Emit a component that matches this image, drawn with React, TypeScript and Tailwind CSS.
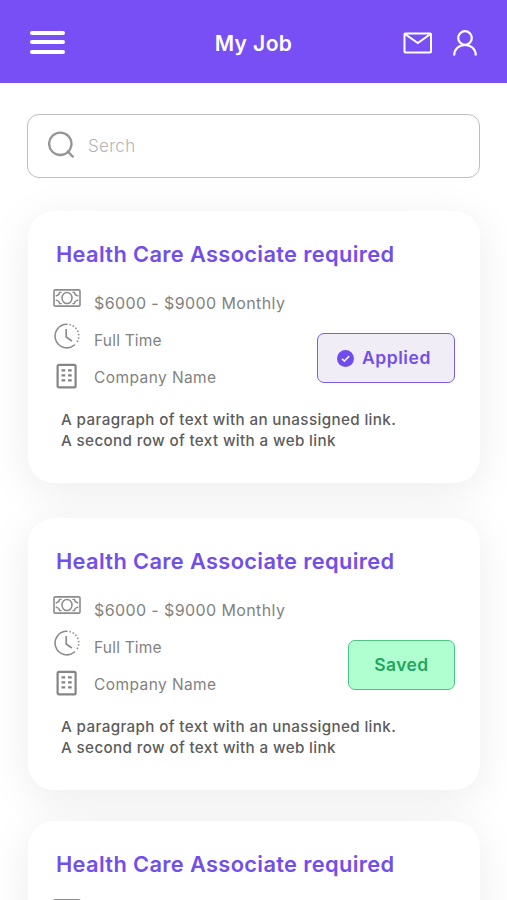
import React from 'react';

type JobStatus = 'applied' | 'saved';

interface Job {
  id: number;
  title: string;
  salary: string;
  type: string;
  company: string;
  description: string[];
  status: JobStatus;
}

const jobs: Job[] = [1, 2, 3].map((id) => ({
  id,
  title: 'Health Care Associate required',
  salary: '$6000 - $9000 Monthly',
  type: 'Full Time',
  company: 'Company Name',
  description: ['A paragraph of text with an unassigned link.', 'A second row of text with a web link'],
  status: id === 1 ? 'applied' : 'saved',
}));

function MoneyIcon() {
  return (
    <svg className="w-7 h-[18px]" viewBox="0 0 28 18" fill="none" stroke="#8c8c8c" strokeWidth={1.6}>
      <rect x="1" y="0.9" width="26" height="16.2" rx="1.2" />
      <ellipse cx="14" cy="9" rx="5" ry="5.6" strokeWidth={1.5} />
      <path
        d="M8.6 3.4H6.6A3.6 3.6 0 0 1 3.4 6.6V7.4M19.4 3.4h2a3.6 3.6 0 0 0 3.2 3.2V7.4M8.6 14.6H6.6a3.6 3.6 0 0 0-3.2-3.2V10.6M19.4 14.6h2a3.6 3.6 0 0 1 3.2-3.2V10.6"
        strokeWidth={1.4}
      />
    </svg>
  );
}

function ClockIcon() {
  return (
    <svg className="w-[26px] h-[26px]" viewBox="0 0 26 26" fill="none" stroke="#8c8c8c" strokeWidth={1.6}>
      <path d="M13 1.2A11.8 11.8 0 1 0 20.5 22" strokeLinecap="round" />
      <path d="M15.5 1.5A11.8 11.8 0 0 1 22.6 19.8" strokeDasharray="1.5 1.9" strokeWidth={1.6} />
      <path d="M12.2 6v8l5.6 4" strokeWidth={1.7} />
    </svg>
  );
}

function BuildingIcon() {
  return (
    <svg className="w-[21px] h-[26px]" viewBox="0 0 21 26" fill="none" stroke="#858585">
      <rect x="1.6" y="1.9" width="18" height="22.4" rx="1.4" strokeWidth={2.2} />
      <path
        d="M5.5 7.4h3.7M12 7.4h3.7M5.5 12.4h3.7M12 12.4h3.7M5.5 17.4h3.7M12 17.4h3.7"
        strokeWidth={2.3}
      />
    </svg>
  );
}

function StatusButton({ status }: { status: JobStatus }) {
  if (status === 'applied') {
    return (
      <button className="flex items-center w-[138px] h-[50px] pl-[19px] rounded-[7px] border border-[#7a5cec] bg-[#f0edf6] text-[#724eeb]">
        <svg className="w-[17px] h-[17px] mr-2 shrink-0" viewBox="0 0 17 17">
          <circle cx="8.5" cy="8.5" r="8.5" fill="#704cea" />
          <path d="M5 8.9l2.4 2.2 4.8-4.9" fill="none" stroke="#f0edf6" strokeWidth="1.7" />
        </svg>
        <span className="text-[17.5px] leading-none font-semibold tracking-[0.55px]">Applied</span>
      </button>
    );
  }

  return (
    <button className="flex items-center justify-center w-[107px] h-[50px] rounded-[7px] border border-[#4cc482] bg-[#b0ffd0] text-[#24a65c]">
      <span className="text-[17.5px] leading-none font-semibold tracking-[0.4px]">Saved</span>
    </button>
  );
}

function JobCard({ job }: { job: Job }) {
  return (
    <article className="h-[272px] shrink-0 rounded-[26px] bg-white pl-[25px] pr-[25px] pt-[29px] shadow-[0_8px_44px_rgba(0,0,0,0.08)]">
      <h2 className="pl-[3px] text-[21.8px] leading-[28px] font-semibold tracking-[0.36px] text-[#724eeb] whitespace-nowrap">
        {job.title}
      </h2>
      <div className="flex justify-between mt-[18px]">
        <ul className="text-[15.5px] leading-[20px] text-[#828282] whitespace-nowrap">
          <li className="flex h-[37px]">
            <span className="w-[41px] pt-[3px]"><MoneyIcon /></span>
            <span className="pt-[7px] text-[16px] tracking-[0.4px]">{job.salary}</span>
          </li>
          <li className="flex h-[38px]">
            <span className="w-[41px] pl-px"><ClockIcon /></span>
            <span className="pt-[8px] tracking-[0.2px]">{job.type}</span>
          </li>
          <li className="flex h-[37px]">
            <span className="w-[41px] pl-[3px] pt-[2px]"><BuildingIcon /></span>
            <span className="pt-[7px] tracking-[0.42px]">{job.company}</span>
          </li>
        </ul>
        <div className="pt-[47px] -ml-6">
          <StatusButton status={job.status} />
        </div>
      </div>
      <p className="pl-2 mt-[12px] text-[15.2px] leading-[20.5px] font-medium tracking-[0.37px] text-[#5c5c5c] whitespace-nowrap">
        {job.description[0]}
        <br />
        {job.description[1]}
      </p>
    </article>
  );
}

export default function App() {
  return (
    <div className="w-[507px] h-[900px] overflow-x-hidden overflow-y-auto [scrollbar-width:none] bg-white font-['Inter',sans-serif]">
      <header className="grid grid-cols-3 items-center h-[83px] px-[30px] bg-[#774ff5] text-white">
        <button className="flex flex-col gap-[5.5px] w-[34.5px] pt-px" aria-label="Menu">
          <span className="h-1 w-full rounded-full bg-white" />
          <span className="h-1 w-full rounded-full bg-white" />
          <span className="h-1 w-full rounded-full bg-white" />
        </button>
        <h1 className="text-center text-[21px] leading-none font-semibold tracking-[0.4px] pt-[3px]">My Job</h1>
        <div className="flex items-center justify-end gap-[20px] pt-[3px]">
          <svg className="w-[30px] h-[22px]" viewBox="0 0 30 22" fill="none" stroke="white" strokeWidth={2}>
            <rect x="1.5" y="1.5" width="26.5" height="19" rx="0.8" />
            <path d="M2 2l12.8 9L27.5 2" />
          </svg>
          <svg className="w-6 h-[26px]" viewBox="0 0 24 26" fill="none" stroke="white" strokeWidth={2.2}>
            <circle cx="12" cy="8" r="6.8" />
            <path d="M1.2 25.5C1.2 19 6 15 12 15s10.8 4 10.8 10.5" />
          </svg>
        </div>
      </header>

      <main className="px-[27px]">
        <label className="flex items-center w-[453px] h-16 mt-[31px] pl-5 rounded-xl border border-[#bebebe] bg-white">
          <svg className="w-[27px] h-[27px] mr-[13px] -mt-1 shrink-0" viewBox="0 0 27 27" fill="none" stroke="#969696" strokeWidth={2.3}>
            <circle cx="12.3" cy="12.8" r="11.2" />
            <path d="M19.8 20.6l5 5" strokeLinecap="round" />
          </svg>
          <input
            type="text"
            placeholder="Serch"
            className="w-full bg-transparent outline-none pt-0.5 text-[17px] font-light tracking-[0.3px] placeholder:text-[#b4b4b4]"
          />
        </label>

        <section className="flex flex-col pl-px pt-[33px] w-[453px]">
          <JobCard job={jobs[0]} />
          <div className="h-[35px]" />
          <JobCard job={jobs[1]} />
          <div className="h-[31px]" />
          <JobCard job={jobs[2]} />
        </section>
      </main>
    </div>
  );
}
